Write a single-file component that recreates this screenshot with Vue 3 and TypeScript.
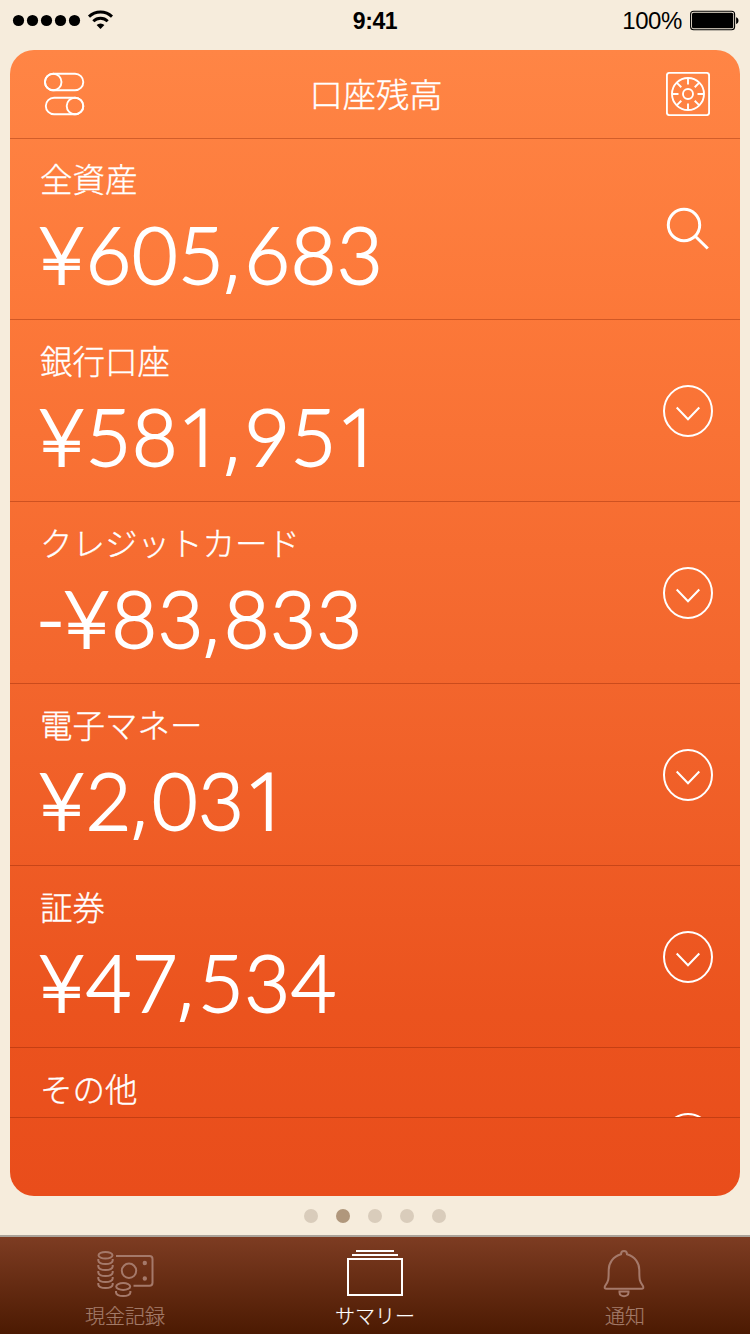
<script setup lang="ts">
interface Account {
  label: string
  amount?: string
  icon: 'search' | 'expand'
}

const accounts: Account[] = [
  { label: '全資産', amount: '¥605,683', icon: 'search' },
  { label: '銀行口座', amount: '¥581,951', icon: 'expand' },
  { label: 'クレジットカード', amount: '-¥83,833', icon: 'expand' },
  { label: '電子マネー', amount: '¥2,031', icon: 'expand' },
  { label: '証券', amount: '¥47,534', icon: 'expand' },
  { label: 'その他', icon: 'expand' },
]

const glyphClasses: Record<string, string> = {
  '1': 'one',
  ',': 'comma',
  '-': 'minus',
  '¥': 'yen',
}

// Splits an amount into runs so that single glyphs can carry their own metrics.
function runs(amount: string): { text: string; cls: string }[] {
  return (amount.match(/[1,\-¥]|[^1,\-¥]+/g) ?? []).map((text) => ({
    text,
    cls: glyphClasses[text] ?? 'digits',
  }))
}

const pageCount = 5
const activePage = 2
const dialAngles = [0, 45, 90, 135, 180, 225, 270, 315]
const coinRows = [10, 16, 22, 28, 34]
</script>

<template>
  <div class="screen">
    <header class="status">
      <svg class="signal" width="114" height="40" viewBox="0 0 114 40">
        <circle v-for="n in 5" :key="n" :cx="4.5 + n * 14" cy="20.5" r="5.6" />
        <g fill="none" stroke="#000" stroke-width="2.9">
          <path d="M89 16.6a16.5 16.5 0 0 1 23 0" />
          <path d="M93.3 21.2a10.3 10.3 0 0 1 14.4 0" />
        </g>
        <path d="M96.6 25.1a5.7 5.7 0 0 1 7.8 0L100.5 29z" />
      </svg>
      <span class="time">9:41</span>
      <span class="percent">100%</span>
      <svg class="battery" width="50" height="22" viewBox="0 0 50 22">
        <rect x="0.6" y="1.3" width="44" height="18.4" rx="3" fill="none" stroke="#000" stroke-width="1.1" />
        <rect x="2" y="2.7" width="41.2" height="15.6" rx="1.5" />
        <path d="M46.1 7.2c3.2.8 3.2 6 0 6.7z" />
      </svg>
    </header>

    <main class="card">
      <div class="card-head">
        <svg width="42" height="44" viewBox="0 0 42 44" class="line">
          <rect x="1" y="1.7" width="38.3" height="16.6" rx="8.3" />
          <circle cx="9.2" cy="10" r="8.3" />
          <rect x="1.8" y="25.7" width="37.5" height="16.6" rx="8.3" />
          <circle cx="31" cy="34" r="8.3" />
        </svg>
        <h1>口座残高</h1>
        <svg width="44" height="44" viewBox="0 0 44 44" class="line">
          <rect x="0.9" y="0.9" width="42.2" height="42.2" rx="2.5" />
          <circle cx="22" cy="22" r="16" />
          <circle cx="22" cy="22" r="5" />
          <path
            v-for="a in dialAngles"
            :key="a"
            d="M22 6v6.5"
            :transform="`rotate(${a} 22 22)`"
          />
        </svg>
      </div>

      <ul class="list">
        <li v-for="account in accounts" :key="account.label" class="row">
          <div class="info">
            <span class="label">{{ account.label }}</span>
            <span v-if="account.amount" class="amount"><span
              v-for="(run, i) in runs(account.amount)"
              :key="i"
              :class="run.cls"
            >{{ run.text }}</span></span>
          </div>
          <svg v-if="account.icon === 'search'" class="glyph search" width="52" height="54" viewBox="0 0 52 54">
            <circle cx="22" cy="25" r="15.7" />
            <path d="M33 36l12.8 12.5" />
          </svg>
          <svg v-else class="glyph" width="52" height="54" viewBox="0 0 52 54">
            <ellipse cx="26" cy="27" rx="24" ry="25" />
            <path d="M14.7 23.5L26 35.2l11.3-11.7" />
          </svg>
        </li>
      </ul>
    </main>

    <div class="pager">
      <i v-for="n in pageCount" :key="n" :class="{ on: n === activePage }" />
    </div>

    <nav class="tabs">
      <a class="tab">
        <svg class="cash" width="58" height="50" viewBox="0 0 58 50">
          <ellipse cx="8.5" cy="6.2" rx="7" ry="3.3" />
          <path v-for="y in coinRows" :key="y" :d="`M1.3 ${y}v1.5c0 2 3 3.6 7.2 3.6s7.2-1.6 7.2-3.6V${y}`" />
          <path d="M19 7H52.5Q55.5 7 55.5 10V33.7Q55.5 36.7 52.5 36.7H36.5" />
          <circle cx="32" cy="21.8" r="7.2" />
          <circle cx="47.8" cy="14" r="1.2" class="solid" />
          <circle cx="47.8" cy="29.5" r="1.2" class="solid" />
          <ellipse cx="26.2" cy="37.5" rx="7" ry="3.5" />
          <path d="M19 42v1.5c0 2 3 3.6 7.2 3.6s7.2-1.6 7.2-3.6V42" />
        </svg>
        <span>現金記録</span>
      </a>
      <a class="tab on">
        <svg width="58" height="50" viewBox="0 0 58 50">
          <path d="M10 2h38M6 6h46" />
          <rect x="2" y="10" width="54" height="36" />
        </svg>
        <span>サマリー</span>
      </a>
      <a class="tab">
        <svg width="58" height="50" viewBox="0 0 58 50">
          <path
            d="M25 5.3C25 0.8 31 0.8 31 5.3C39 7.5 43.3 14 43.3 21C43.3 31 43.5 32.5 47 37.2Q48 39.8 45.5 39.8H10.5Q8 39.8 9 37.2C12.5 32.5 12.7 31 12.7 21C12.7 14 17 7.5 25 5.3Z"
          />
          <path d="M23.5 42.5h9v1c0 5-9 5-9 0z" />
        </svg>
        <span>通知</span>
      </a>
    </nav>
  </div>
</template>

<style>
body {
  margin: 0;
  background: #f6ecdc;
}
</style>

<style scoped>
.screen {
  display: flex;
  flex-direction: column;
  width: 750px;
  height: 1334px;
  overflow: hidden;
  background: #f6ecdc;
  color: #fff;
  font-family: Lato, "Noto Sans CJK JP", sans-serif;
}

.status {
  display: grid;
  grid-template-columns: 300px 150px 232px 68px;
  align-items: center;
  box-sizing: border-box;
  height: 50px;
  padding-bottom: 8px;
  color: #000;
  font: 24px/40px "Liberation Sans", Arial, sans-serif;
}

.signal {
  margin-top: -2px;
}

.time {
  text-align: center;
  font-weight: 700;
  font-size: 23px;
  letter-spacing: -0.4px;
}

.percent {
  text-align: right;
  letter-spacing: -0.4px;
}

.battery {
  margin-left: 8px;
}

.card {
  box-sizing: border-box;
  height: 1146px;
  margin: 0 10px;
  border-radius: 24px;
  overflow: hidden;
  background: linear-gradient(#ff8545 0%, #fc7839 23%, #f3662d 54%, #eb531e 84%, #e94d1b 100%);
}

.card-head {
  display: flex;
  align-items: center;
  justify-content: space-between;
  box-sizing: border-box;
  height: 89px;
  padding: 0 30px 0 34px;
  border-bottom: 1px solid rgba(128, 30, 0, 0.35);
}

.card-head h1 {
  margin: -3px 0 0;
  font: 300 33.3px/48px "Noto Sans CJK JP", sans-serif;
  -webkit-text-stroke: 0.35px #fff;
}

.line {
  fill: none;
  stroke: #fff;
  stroke-width: 1.9;
}

.list {
  height: 978px;
  margin: 0;
  padding: 0;
  list-style: none;
  overflow: hidden;
  border-bottom: 1px solid rgba(128, 30, 0, 0.35);
}

.row {
  display: flex;
  justify-content: space-between;
  box-sizing: border-box;
  height: 182px;
  padding: 0 26px 0 30px;
  border-bottom: 1px solid rgba(128, 30, 0, 0.35);
}

.row:first-child {
  height: 181px;
}

.info {
  display: flex;
  flex-direction: column;
}

.label {
  margin-top: 15px;
  font: 300 32.5px/48px "Noto Sans CJK JP", sans-serif;
  -webkit-text-stroke: 0.35px #fff;
}

.row:not(:first-child) .label {
  margin-top: 16px;
}

.amount {
  height: 96px;
  margin-top: 4px;
  font: 300 78.5px/96px Lato, sans-serif;
  font-kerning: none;
  letter-spacing: 0.7px;
  white-space: nowrap;
  -webkit-text-stroke: 1.9px #fff;
}

.yen {
  display: inline-block;
  margin: 0 1px 0 -1.5px;
  line-height: 1;
  transform: scaleX(1.06);
}

.minus {
  margin: 0 0 0 -4px;
}

.one,
.comma {
  display: inline-block;
  width: 46.3px;
  font-family: "Open Sans", sans-serif;
  line-height: 1;
}

.comma {
  width: 20px;
  font-size: 70px;
}

.glyph {
  margin-top: 64px;
  fill: none;
  stroke: #fff;
  stroke-width: 2;
}

.search {
  margin-top: 61px;
  stroke-width: 3;
}

.pager {
  display: flex;
  justify-content: center;
  gap: 18px;
  box-sizing: border-box;
  height: 39px;
  padding-top: 13px;
}

.pager i {
  width: 14px;
  height: 14px;
  border-radius: 50%;
  background: #d9ccbb;
}

.pager i.on {
  background: #b0977c;
}

.tabs {
  display: grid;
  grid-template-columns: repeat(3, 1fr);
  box-sizing: border-box;
  height: 99px;
  border-top: 2px solid #aaa39a;
  background: linear-gradient(#7d3c22, #4c1a02);
}

.tab {
  display: flex;
  flex-direction: column;
  align-items: center;
  padding-top: 12px;
  color: #a27a68;
  font: 300 20px/28px "Noto Sans CJK JP", sans-serif;
  -webkit-text-stroke: 0.2px currentColor;
}

.tab svg {
  fill: none;
  stroke: #a5796a;
  stroke-width: 2;
}

.tab .cash {
  margin-left: 2px;
}

.tab .solid {
  fill: #a5796a;
}

.tab span {
  margin-top: 3px;
}

.tab.on {
  color: #fff;
}

.tab.on svg {
  stroke: #fff;
}
</style>
